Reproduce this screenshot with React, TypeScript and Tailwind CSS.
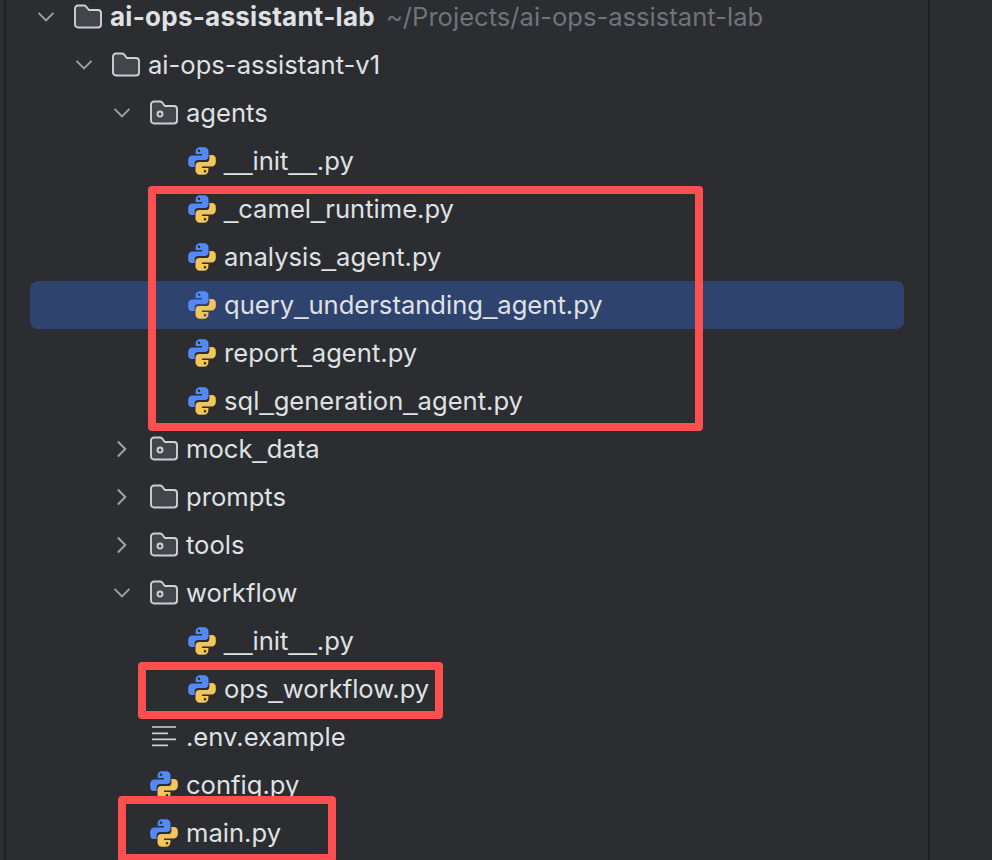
type Kind = "folder" | "package" | "python" | "text";

type Row = {
  name: string;
  depth: number;
  kind: Kind;
  open?: boolean;
  bold?: boolean;
  hint?: string;
  selected?: boolean;
};

const rows: Row[] = [
  { name: "ai-ops-assistant-lab", depth: 0, kind: "folder", open: true, bold: true, hint: "~/Projects/ai-ops-assistant-lab" },
  { name: "ai-ops-assistant-v1", depth: 1, kind: "folder", open: true },
  { name: "agents", depth: 2, kind: "package", open: true },
  { name: "__init__.py", depth: 3, kind: "python" },
  { name: "_camel_runtime.py", depth: 3, kind: "python" },
  { name: "analysis_agent.py", depth: 3, kind: "python" },
  { name: "query_understanding_agent.py", depth: 3, kind: "python", selected: true },
  { name: "report_agent.py", depth: 3, kind: "python" },
  { name: "sql_generation_agent.py", depth: 3, kind: "python" },
  { name: "mock_data", depth: 2, kind: "package", open: false },
  { name: "prompts", depth: 2, kind: "folder", open: false },
  { name: "tools", depth: 2, kind: "package", open: false },
  { name: "workflow", depth: 2, kind: "package", open: true },
  { name: "__init__.py", depth: 3, kind: "python" },
  { name: "ops_workflow.py", depth: 3, kind: "python" },
  { name: ".env.example", depth: 2, kind: "text" },
  { name: "config.py", depth: 2, kind: "python" },
  { name: "main.py", depth: 2, kind: "python" },
];

function Chevron({ open }: { open: boolean }) {
  if (open) {
    return (
      <svg width="28" height="28" viewBox="0 0 28 28" fill="none" className="shrink-0">
        <path d="M2.5 9.800 10 17.300l7.500-7.500" stroke="#a0a3a8" strokeWidth="1.9" />
      </svg>
    );
  }
  return (
    <svg width="28" height="28" viewBox="0 0 28 28" fill="none" className="shrink-0">
      <path d="M5.800 6.500 13.300 14l-7.500 7.500" stroke="#a0a3a8" strokeWidth="1.9" />
    </svg>
  );
}

function FolderIcon({ dot }: { dot: boolean }) {
  return (
    <svg width="28" height="28" viewBox="0 0 28 28" fill="none" className="shrink-0">
      <path
        d="M1 5.500a3 3 0 0 1 3-3h6c.8 0 1.500.3 2 .9L15 7h9a3 3 0 0 1 3 3v11.500a3 3 0 0 1-3 3H4a3 3 0 0 1-3-3Z"
        fill="#43454a"
        stroke="#ced0d6"
        strokeWidth="1.9"
      />
      {dot && <circle cx="10" cy="15" r="2.500" stroke="#ced0d6" strokeWidth="1.900" />}
    </svg>
  );
}

const snake =
  "M11.8.3h4.5a4.2 4.2 0 0 1 4.2 4.2v4.6a3.9 3.9 0 0 1-3.9 3.9h-6.4a3.6 3.6 0 0 0-3.6 3.6v3.5H4.3A4.1 4.1 0 0 1 .2 16.2v-3.5a4.2 4.2 0 0 1 4.2-4.2H14V7H7.6V4.5A4.2 4.2 0 0 1 11.8.3ZM11 2.4a1.3 1.3 0 1 0 0 2.6 1.3 1.3 0 0 0 0-2.6Z";

function PythonIcon() {
  return (
    <svg width="28" height="28" viewBox="0 0 28 28" className="shrink-0">
      <path d={snake} fill="#548af7" fillRule="evenodd" />
      <path d={snake} fill="#f2c55c" fillRule="evenodd" transform="rotate(180 14 14)" />
    </svg>
  );
}

function TextIcon() {
  return (
    <svg width="28" height="28" viewBox="0 0 28 28" fill="none" className="shrink-0">
      <path d="M2 4h24M2 10.300h16M2 16.300h24M2 22.300h16" stroke="#ced0d6" strokeWidth="1.700" />
    </svg>
  );
}

// the underscore in the shot is wider than Inter's, so it gets its own font
function FileName({ name }: { name: string }) {
  return (
    <>
      {name.split(/(_)/).map((part, i) =>
        part === "_" ? (
          <span key={i} className="font-['Liberation_Sans',sans-serif]">
            _
          </span>
        ) : (
          part
        ),
      )}
    </>
  );
}

function TreeRow({ row }: { row: Row }) {
  return (
    <div
      className={`flex h-12 items-center rounded-lg ${row.selected ? "bg-[#2e436e]" : ""}`}
      style={{ paddingLeft: 6 + row.depth * 38 }}
    >
      <div className="w-[38px] shrink-0">{row.open !== undefined && <Chevron open={row.open} />}</div>
      {row.kind === "folder" && <FolderIcon dot={false} />}
      {row.kind === "package" && <FolderIcon dot />}
      {row.kind === "python" && <PythonIcon />}
      {row.kind === "text" && <TextIcon />}
      <span className={`ml-2 whitespace-pre text-[#dfe1e5] ${row.bold ? "text-[26px] font-bold tracking-[0.25px]" : ""}`}>
        <FileName name={row.name} />
      </span>
      {row.hint && <span className="ml-[11px] whitespace-pre text-[#6f737a]">{row.hint}</span>}
    </div>
  );
}

export default function App() {
  return (
    <div className="relative flex h-[860px] w-[992px] overflow-hidden bg-[#2b2d30] font-['Inter',sans-serif] text-[25.6px] leading-[30px]">
      <div className="ml-1 w-0.5 shrink-0 bg-[#1e1f22]" />
      <div className="w-[922px] shrink-0 pl-6">
        <div className="mt-[-7px] w-[874px]">
          {rows.map((row, i) => (
            <TreeRow key={i} row={row} />
          ))}
        </div>
      </div>
      <div className="w-0.5 shrink-0 bg-[#1e1f22]" />

      {/* annotation boxes drawn over the tree */}
      <div className="absolute left-[148px] top-[186px] h-[245px] w-[555px] rounded border-8 border-[#fc5050]" />
      <div className="absolute left-[138px] top-[662px] h-[57px] w-[305px] rounded border-8 border-[#fc5050]" />
      <div className="absolute left-[118px] top-[796px] h-[66px] w-[218px] rounded border-8 border-[#fc5050]" />
    </div>
  );
}
